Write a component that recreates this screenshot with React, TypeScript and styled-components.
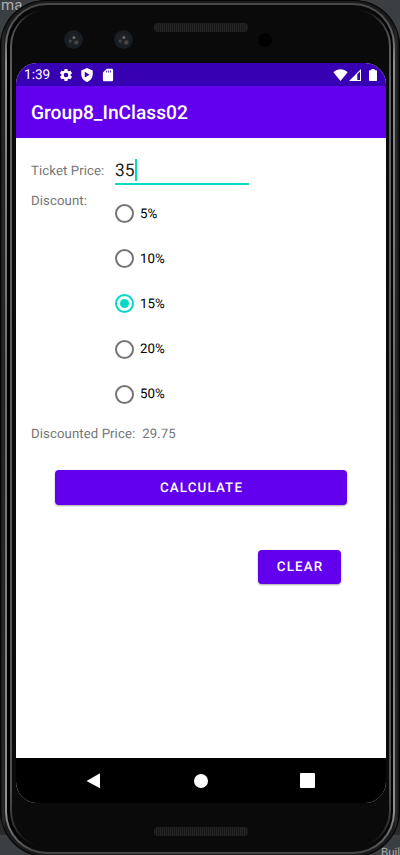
import React, { useState } from "react";
import styled, { createGlobalStyle } from "styled-components";

const GlobalStyle = createGlobalStyle`
  *, *::before, *::after { box-sizing: border-box; }
  html, body { margin: 0; overflow: hidden; background: #3c3f41; }
  body { font-family: Roboto, "Noto Sans", sans-serif; text-rendering: geometricPrecision; }
  button { text-rendering: geometricPrecision; }
`;

const Desktop = styled.div`
  position: relative;
  width: 400px;
  height: 855px;
  overflow: hidden;
  background: linear-gradient(#3c3f41 0 700px, #2b2b2b 700px 835px, #3c3f41 835px);
`;

const DesktopText = styled.span<{ $x: number; $y: number; $size: number }>`
  position: absolute;
  left: ${(p) => p.$x}px;
  top: ${(p) => p.$y}px;
  font-size: ${(p) => p.$size}px;
  line-height: 16px;
  color: #a9adb0;
`;

const Shell = styled.div`
  position: relative;
  height: 857px;
  padding: 3px 5px;
  border-radius: 46px;
  background: linear-gradient(90deg, #060606 0, #2c2c2c 3px, #1a1a1a 5px, #1a1a1a 394px, #2c2c2c 396px, #080808 400px);
  box-shadow: inset 0 0 0 1px #050505;
`;

const MetalRim = styled.div`
  height: 100%;
  padding: 2px;
  border-radius: 42px;
  background: linear-gradient(#484848 0, #585858 25px, #909090 60px, #808080 160px, #6c6c6c 400px, #909090 810px, #444 851px);
`;

const Gap = styled.div`
  height: 100%;
  padding: 4px 2px 4px 3px;
  border-radius: 40px;
  background: linear-gradient(#0a0a0a 0 3px, #020202 20px 825px, #0a0a0a 843px);
`;

const InnerRim = styled.div`
  height: 100%;
  padding: 1px 2px;
  border-radius: 37px;
  background: linear-gradient(#0a0a0a 0, #38383c 12px, #55555a 30px, #606066 80px, #505056 780px, #333338 815px, #0a0a0a 838px);
`;

const Bezel = styled.div`
  display: flex;
  flex-direction: column;
  height: 100%;
  padding: 0 3px 0 4px;
  border-radius: 36px;
  background: #0a0a0a;
`;

const TopHardware = styled.div`
  position: relative;
  flex: 0 0 53px;
`;

const Grille = styled.div<{ $top: number }>`
  position: relative;
  width: 94px;
  height: 9px;
  margin: ${(p) => p.$top}px 0 0 138px;
  border-radius: 4px;
  background: repeating-linear-gradient(90deg, #242424 0 1px, #181818 1px 2px);
`;

const Lens = styled.div<{ $x: number }>`
  position: absolute;
  left: ${(p) => p.$x}px;
  top: 20px;
  width: 19px;
  height: 19px;
  border-radius: 50%;
  background:
    radial-gradient(circle at 52% 40%, #77777b 0 0.5px, transparent 2px),
    radial-gradient(circle at 65% 66%, #4b4848 0 1px, transparent 3px),
    radial-gradient(circle at 33% 58%, #3c4650 0 1px, transparent 2px),
    radial-gradient(circle, #202123 0 5px, #171d22 7px 9px, #0c0e10 10px);
`;

const Sensor = styled.div`
  position: absolute;
  left: 242px;
  top: 23px;
  width: 14px;
  height: 14px;
  border-radius: 50%;
  background: #010102;
`;

const Screen = styled.main`
  display: flex;
  flex-direction: column;
  flex: 0 0 740px;
  border-radius: 21px;
  overflow: hidden;
  background: #fff;
`;

const StatusBar = styled.div`
  display: flex;
  align-items: center;
  flex: 0 0 23px;
  padding: 0 7px 0 8px;
  background: #3700b3;
  color: #fff;
  font-size: 13.6px;
`;

const StatusIcons = styled.div<{ $left?: boolean }>`
  display: flex;
  align-items: center;
  gap: ${(p) => (p.$left ? "7px" : "1px")};
  margin-left: ${(p) => (p.$left ? "9px" : "auto")};
  svg { display: block; }
  svg:last-child { margin-left: ${(p) => (p.$left ? 0 : 5)}px; }
`;

const Clock = styled.span`
  width: 26px;
  padding-top: 1px;
`;

const AppBar = styled.header`
  flex: 0 0 52px;
  height: 52px;
  min-height: 0;
  padding-left: 15px;
  background: #6200ee;
  color: #fff;
  font-size: 19.2px;
  font-weight: 500;
  line-height: 54px;
`;

const Content = styled.section`
  flex: 1;
  padding: 16px 15px 0;
  color: #757575;
  font-size: 13.2px;
  letter-spacing: 0.09px;
`;

const FormRow = styled.div<{ $height: number }>`
  display: grid;
  grid-template-columns: 84px 134px;
  height: ${(p) => p.$height}px;
`;

const Label = styled.span<{ $top: number }>`
  padding-top: ${(p) => p.$top}px;
  line-height: 18px;
`;

const PriceField = styled.div`
  display: flex;
  align-items: center;
  height: 31px;
  padding-top: 4px;
  border-bottom: 2px solid #03dac5;
  color: #212121;
  font-size: 17.4px;
  letter-spacing: 0;
`;

const Caret = styled.i`
  width: 2px;
  height: 22px;
  margin-top: -2px;
  background: #03dac5;
`;

const Options = styled.div`
  display: flex;
  flex-direction: column;
  padding-top: 1px;
`;

const Option = styled.button`
  display: flex;
  flex: 0 0 45.2px;
  align-items: center;
  gap: 6px;
  height: 45.2px;
  padding: 0;
  border: 0;
  background: none;
  color: #000;
  font: 13.3px/18px Roboto, sans-serif;
  letter-spacing: 0;
`;

const OptionText = styled.span`
  padding-top: 2px;
`;

const RadioRing = styled.span<{ $checked: boolean }>`
  display: grid;
  place-items: center;
  width: 19px;
  height: 19px;
  border: 2px solid ${(p) => (p.$checked ? "#03dac5" : "#757575")};
  border-radius: 50%;
  &::after {
    content: "";
    width: 9px;
    height: 9px;
    border-radius: 50%;
    background: ${(p) => (p.$checked ? "#03dac5" : "transparent")};
  }
`;

const Result = styled.div`
  display: flex;
  gap: 7px;
  line-height: 18px;
`;

const Actions = styled.div`
  display: flex;
  flex-direction: column;
  align-items: flex-end;
  gap: 45px;
  margin-top: 26px;
`;

const ActionButton = styled.button<{ $width: number; $inset: number }>`
  width: ${(p) => p.$width}px;
  height: 34.5px;
  margin-right: ${(p) => p.$inset}px;
  padding: 2px 0 0 1px;
  border: 0;
  border-radius: 4px;
  background: #6200ee;
  box-shadow: 0 1px 2px rgba(0, 0, 0, 0.35);
  color: #fff;
  font: 500 13.4px Roboto, sans-serif;
  letter-spacing: 1.12px;
`;

const NavBar = styled.nav`
  display: flex;
  flex: 0 0 45px;
  align-items: center;
  justify-content: space-between;
  padding: 0 71px 0 70px;
  background: #000;
  svg { display: block; }
`;

const rates = [5, 10, 15, 20, 50];

export default function App() {
  const [rate, setRate] = useState(15);

  return (
    <>
      <GlobalStyle />
      <Desktop>
        <DesktopText $x={1} $y={-3} $size={15}>ma</DesktopText>
        <DesktopText $x={381} $y={844} $size={11.5}>Buil</DesktopText>
        <Shell>
          <MetalRim>
            <Gap>
              <InnerRim>
                <Bezel>
                  <TopHardware>
                    <Grille $top={13} />
                    <Lens $x={48} />
                    <Lens $x={98} />
                    <Sensor />
                  </TopHardware>
                  <Screen>
                    <StatusBar>
                      <Clock>1:39</Clock>
                      <StatusIcons $left>
                        <svg width="14" height="14" viewBox="1 1 22 22" fill="#fff">
                          <path d="M19.14 12.94a7.5 7.5 0 0 0 0-1.88l2.03-1.58a.5.5 0 0 0 .12-.61l-1.92-3.32a.49.49 0 0 0-.59-.22l-2.39.96a7 7 0 0 0-1.62-.94l-.36-2.54a.48.48 0 0 0-.48-.41h-3.84a.47.47 0 0 0-.47.41l-.36 2.54a7.4 7.4 0 0 0-1.62.94l-2.39-.96a.48.48 0 0 0-.59.22L2.74 8.87a.47.47 0 0 0 .12.61l2.03 1.58a7.4 7.4 0 0 0 0 1.88l-2.03 1.58a.5.5 0 0 0-.12.61l1.92 3.32c.12.22.37.29.59.22l2.39-.96c.5.38 1.03.7 1.62.94l.36 2.54c.05.24.24.41.48.41h3.84c.24 0 .44-.17.47-.41l.36-2.54a7 7 0 0 0 1.62-.94l2.39.96c.22.08.47 0 .59-.22l1.92-3.32a.47.47 0 0 0-.12-.61zM12 15.6a3.6 3.6 0 1 1 0-7.2 3.6 3.6 0 0 1 0 7.2z" />
                        </svg>
                        <svg width="14" height="14" viewBox="1 1 22 22" fill="#fff" fillRule="evenodd">
                          <path d="M12 1 3 5v6c0 5.55 3.84 10.74 9 12 5.16-1.26 9-6.45 9-12V5zM8.5 7v9l7.5-4.5z" />
                        </svg>
                        <svg width="14" height="14" viewBox="1 1 22 22" fill="#fff" fillRule="evenodd">
                          <path d="M18 2h-8L4 8v12a2 2 0 0 0 2 2h12a2 2 0 0 0 2-2V4a2 2 0 0 0-2-2zM9.3 5h1.3v3H9.3zm3 0h1.3v3h-1.3zm3 0h1.3v3h-1.3z" />
                        </svg>
                      </StatusIcons>
                      <StatusIcons>
                        <svg width="15" height="12" viewBox="0 0 15 12" fill="#fff">
                          <path d="M.4 3.2C4.5-.7 10.5-.7 14.6 3.2L7.5 12z" />
                        </svg>
                        <svg width="12" height="12" viewBox="0 0 12 12" fill="#fff" fillRule="evenodd">
                          <path d="M12 0v12H0zM8.3 5.2V11H11V2.5z" />
                        </svg>
                        <svg width="12" height="12" viewBox="0 0 12 12" fill="#fff">
                          <path d="M4.4 0h3.2v1.2h1.6q.8 0 .8.8v9.2q0 .8-.8.8H2.8q-.8 0-.8-.8V2q0-.8.8-.8h1.6z" />
                        </svg>
                      </StatusIcons>
                    </StatusBar>
                    <AppBar>Group8_InClass02</AppBar>
                    <Content>
                      <FormRow $height={36}>
                        <Label $top={9}>Ticket Price:</Label>
                        <PriceField>35<Caret /></PriceField>
                      </FormRow>
                      <FormRow $height={236}>
                        <Label $top={3}>Discount:</Label>
                        <Options role="radiogroup">
                          {rates.map((value) => (
                            <Option
                              key={value}
                              role="radio"
                              aria-checked={rate === value}
                              onClick={() => setRate(value)}
                            >
                              <RadioRing $checked={rate === value} />
                              <OptionText>{value}%</OptionText>
                            </Option>
                          ))}
                        </Options>
                      </FormRow>
                      <Result>
                        <span>Discounted Price:</span>
                        <span>29.75</span>
                      </Result>
                      <Actions>
                        <ActionButton $width={292} $inset={24}>CALCULATE</ActionButton>
                        <ActionButton $width={83} $inset={30}>CLEAR</ActionButton>
                      </Actions>
                    </Content>
                    <NavBar>
                      <svg width="15" height="16" viewBox="0 0 15 16" fill="#fff"><path d="M14 .3v15L.5 8z" /></svg>
                      <svg width="14" height="14" viewBox="0 0 14 14" fill="#fff"><circle cx="7" cy="7" r="7" /></svg>
                      <svg width="15" height="15" viewBox="0 0 15 15" fill="#fff"><rect width="15" height="15" rx="1" /></svg>
                    </NavBar>
                  </Screen>
                  <Grille $top={24} />
                </Bezel>
              </InnerRim>
            </Gap>
          </MetalRim>
        </Shell>
      </Desktop>
    </>
  );
}
